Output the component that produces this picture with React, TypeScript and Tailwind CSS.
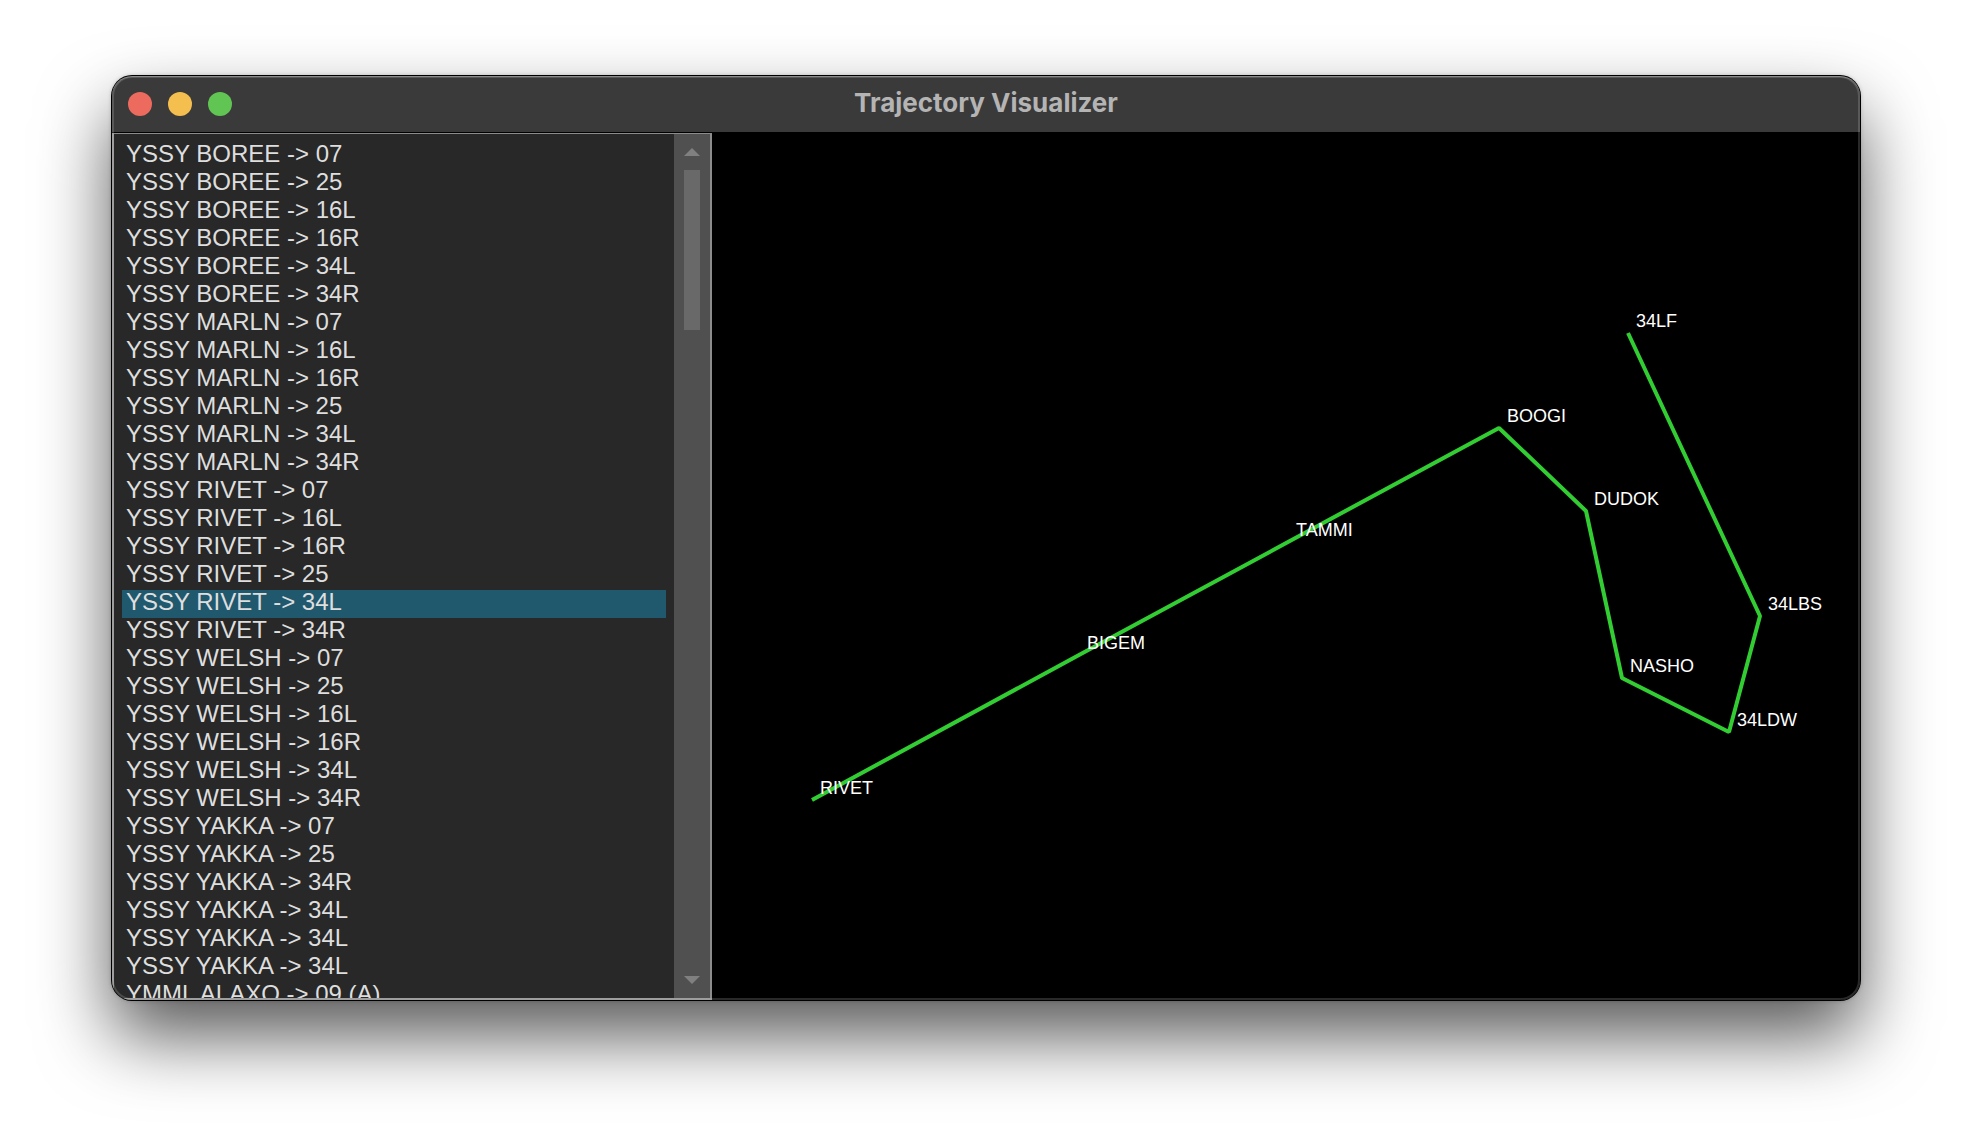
import { useState } from "react";

interface Waypoint {
    name: string;
    x: number;
    y: number;
}

const routes: string[] = [
    "YSSY BOREE -> 07",
    "YSSY BOREE -> 25",
    "YSSY BOREE -> 16L",
    "YSSY BOREE -> 16R",
    "YSSY BOREE -> 34L",
    "YSSY BOREE -> 34R",
    "YSSY MARLN -> 07",
    "YSSY MARLN -> 16L",
    "YSSY MARLN -> 16R",
    "YSSY MARLN -> 25",
    "YSSY MARLN -> 34L",
    "YSSY MARLN -> 34R",
    "YSSY RIVET -> 07",
    "YSSY RIVET -> 16L",
    "YSSY RIVET -> 16R",
    "YSSY RIVET -> 25",
    "YSSY RIVET -> 34L",
    "YSSY RIVET -> 34R",
    "YSSY WELSH -> 07",
    "YSSY WELSH -> 25",
    "YSSY WELSH -> 16L",
    "YSSY WELSH -> 16R",
    "YSSY WELSH -> 34L",
    "YSSY WELSH -> 34R",
    "YSSY YAKKA -> 07",
    "YSSY YAKKA -> 25",
    "YSSY YAKKA -> 34R",
    "YSSY YAKKA -> 34L",
    "YSSY YAKKA -> 34L",
    "YSSY YAKKA -> 34L",
    "YMML ALAXO -> 09 (A)",
];

const waypoints: Waypoint[] = [
    { name: "RIVET", x: 100, y: 667 },
    { name: "BIGEM", x: 367, y: 522 },
    { name: "TAMMI", x: 576, y: 409 },
    { name: "BOOGI", x: 787, y: 295 },
    { name: "DUDOK", x: 874, y: 378 },
    { name: "NASHO", x: 910, y: 545 },
    { name: "34LDW", x: 1017, y: 599 },
    { name: "34LBS", x: 1048, y: 483 },
    { name: "34LF", x: 916, y: 200 },
];

const TitleBar = () => (
    <header className="grid h-14 shrink-0 grid-cols-[1fr_auto_1fr] items-center bg-[#3a3a3a] px-4">
        <div className="flex gap-4">
            <button aria-label="Close" className="size-6 rounded-full bg-[#ed6a5e]" />
            <button aria-label="Minimize" className="size-6 rounded-full bg-[#f4bf4f]" />
            <button aria-label="Zoom" className="size-6 rounded-full bg-[#61c554]" />
        </div>
        <h1 className="pb-0.5 font-['Inter',sans-serif] text-[26px] leading-8 font-bold text-[#b4b4b4]">
            Trajectory Visualizer
        </h1>
    </header>
);

const ScrollBar = () => (
    <div className="flex w-9 shrink-0 flex-col items-center bg-[#505050] py-3.5">
        <button aria-label="Scroll up">
            <svg className="h-2 w-4 fill-[#808080]" viewBox="0 0 16 8">
                <path d="M8 0L16 8H0Z" />
            </svg>
        </button>
        <div className="mt-3.5 h-40 w-4 bg-[#696969]" />
        <button aria-label="Scroll down" className="mt-auto">
            <svg className="h-2 w-4 fill-[#808080]" viewBox="0 0 16 8">
                <path d="M0 0H16L8 8Z" />
            </svg>
        </button>
    </div>
);

const RouteList = () => {
    const [selected, setSelected] = useState<number>(16);

    return (
        <div className="flex w-[600px] shrink-0 border-2 border-t border-[#8c8c8c] bg-[#282828]">
            <select
                aria-label="Routes"
                size={25}
                value={selected}
                onChange={(e) => setSelected(Number(e.target.value))}
                className="h-full min-w-0 flex-1 overflow-y-auto bg-[#282828] p-2 font-['Liberation_Sans',Arial,sans-serif] text-[24px] outline-none [scrollbar-width:none]"
            >
                {routes.map((route, index) => (
                    <option
                        key={index}
                        value={index}
                        className="flex h-7 min-h-0 items-end px-1 pt-0 pb-0.5 [-webkit-text-fill-color:#dedede] checked:bg-linear-to-r checked:from-[#20586e] checked:to-[#20586e]"
                    >
                        {route}
                    </option>
                ))}
            </select>
            <ScrollBar />
        </div>
    );
};

const TrajectoryMap = () => (
    <div className="min-w-0 flex-1 bg-black">
        <svg className="h-full w-full" viewBox="0 0 1148 867" preserveAspectRatio="xMinYMin meet">
            <polyline
                points={waypoints.map((w) => `${w.x},${w.y}`).join(" ")}
                className="fill-none stroke-[#32cd32] stroke-4"
                strokeLinejoin="bevel"
            />
            {waypoints.map((w) => (
                <text
                    key={w.name}
                    x={w.x + 8}
                    y={w.y - 6}
                    className="fill-white font-['Liberation_Sans',Arial,sans-serif] text-lg"
                >
                    {w.name}
                </text>
            ))}
        </svg>
    </div>
);

export default function App() {
    return (
        <div className="flex h-screen overflow-hidden bg-white px-28 pt-[76px] pb-[148px]">
            <div className="flex flex-1 rounded-[20px] shadow-[0_0_0_1px_#000,0_0_4px_rgba(0,0,0,0.3),0_36px_72px_rgba(0,0,0,0.66)]">
                <main className="relative flex flex-1 flex-col overflow-hidden rounded-[20px] bg-black">
                    <TitleBar />
                    <div className="flex min-h-0 flex-1 border-t border-black">
                        <RouteList />
                        <TrajectoryMap />
                    </div>
                    {/* rim light along the window edge */}
                    <div className="pointer-events-none absolute inset-0 rounded-[20px] shadow-[inset_0_1px_0_rgba(255,255,255,0.3),inset_0_0_0_2px_rgba(255,255,255,0.16)]" />
                </main>
            </div>
        </div>
    );
}
